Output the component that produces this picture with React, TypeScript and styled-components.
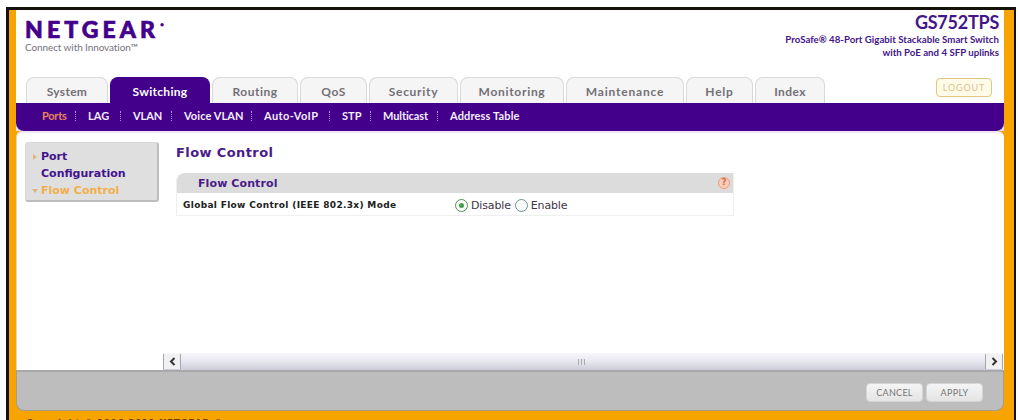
import React, { FC } from "react";
import styled, { createGlobalStyle } from "styled-components";

const GlobalStyle = createGlobalStyle`
  * {
    box-sizing: border-box;
  }

  body {
    margin: 0;
    background: #FFFFFF;
    overflow: hidden;
  }
`;

interface TextProps {
  track?: number;
}

const Frame = styled.div`
  width: 1010px;
  height: 413px;
  margin: 7px 0 0 6px;
  padding: 0 10px 0 7px;
  border: 3px solid #15120C;
  border-right-width: 2px;
  border-bottom: 0;
  background: #F7A400;
  overflow: hidden;
  font-family: Lato, "Liberation Sans", sans-serif;
`;

const Header = styled.header`
  display: flex;
  justify-content: space-between;
  height: 67px;
  padding: 0 5px 0 9px;
  background: #FFFFFF;
`;

const Brand = styled.div`
  padding-top: 9px;
`;

const Logo = styled.div`
  display: flex;
  align-items: flex-start;
  height: 22px;
  color: #43008D;
  font-weight: 900;
  font-size: 23px;
  line-height: 21px;
  letter-spacing: 4.1px;
  -webkit-text-stroke: 0.7px #43008D;
`;

const Registered = styled.span`
  margin-left: 1px;
  font-size: 7px;
  line-height: 10px;
  -webkit-text-stroke: 0;
`;

const Tagline = styled.div<TextProps>`
  color: #77737B;
  font-size: 10px;
  line-height: 13px;
  letter-spacing: ${({track}) => track || 0}px;
  white-space: nowrap;
`;

const Product = styled.div`
  padding-top: 2px;
  color: #43168A;
  text-align: right;
`;

const Model = styled.div`
  font-weight: 700;
  font-size: 18px;
  line-height: 20px;
  letter-spacing: -0.25px;
`;

const ProductInfo = styled.div`
  margin-top: 1px;
  font-weight: 700;
  font-size: 9.7px;
  line-height: 12.5px;
  white-space: nowrap;
`;

interface TabProps extends TextProps {
  isActive?: boolean;
  width: number;
}

const TabBar = styled.nav`
  display: flex;
  align-items: flex-start;
  gap: 2px;
  height: 26px;
  padding-left: 10px;
  background: #FFFFFF;
`;

const Tab = styled.div<TabProps>`
  width: ${({width}) => width}px;
  height: 26px;
  border: 1px solid ${({isActive}) => isActive ? '#43008A' : '#D9D9D9'};
  border-bottom: 0;
  border-radius: 8px 8px 0 0;
  background: ${({isActive}) => isActive ? '#43008A' : '#F5F5F5'};
  color: ${({isActive}) => isActive ? '#FFFFFF' : '#737075'};
  font-weight: 700;
  font-size: 12px;
  line-height: 27px;
  letter-spacing: ${({track}) => track || 0}px;
  text-align: center;
`;

const LogoutButton = styled.button`
  width: 56px;
  height: 19px;
  margin: 1px 12px 0 auto;
  padding: 0;
  border: 1px solid #E3C583;
  border-radius: 4px;
  background: #FFFBE9;
  color: #DFBE8A;
  font-family: Lato, sans-serif;
  font-size: 9px;
  line-height: 17px;
  letter-spacing: 0.9px;
`;

const SubNav = styled.nav`
  display: flex;
  align-items: center;
  height: 28px;
  padding: 0 0 3px 26px;
  border-radius: 0 0 8px 8px;
  background: #43008A;
`;

const SubNavRow = styled.div`
  background: linear-gradient(#43008A 50%, #E9DDF1 50%);
`;

interface SubItemProps extends TextProps {
  isActive?: boolean;
  width: number;
}

const SubItem = styled.div<SubItemProps>`
  width: ${({width}) => width}px;
  color: ${({isActive}) => isActive ? '#E8835F' : '#F4EDFA'};
  font-weight: 700;
  font-size: 11px;
  line-height: 14px;
  letter-spacing: ${({track}) => track || 0}px;
  white-space: nowrap;
`;

const Divider = styled.span`
  width: 1px;
  height: 10px;
  margin-right: 12px;
  border-left: 1px dotted #A98BCB;
`;

const Main = styled.main`
  display: flex;
  height: 239px;
  border-top: 2px solid #EEE6F4;
  border-left: 1px solid #E7D7B6;
  border-radius: 6px 6px 0 0;
  background: #FFFFFF;
  font-family: "DejaVu Sans", sans-serif;
`;

const SideMenu = styled.aside`
  width: 134px;
  height: 60px;
  margin: 9px 0 0 8px;
  padding: 5px 0 0 6px;
  border: 1px solid #DADADA;
  border-right: 2px solid #BDBDBD;
  border-bottom: 2px solid #BDBDBD;
  border-radius: 3px;
  background: #DFDFDF;
`;

interface SideItemProps {
  isActive?: boolean;
}

const SideItem = styled.div<SideItemProps>`
  display: flex;
  gap: 3px;
  color: ${({isActive}) => isActive ? '#F3AF4D' : '#43138F'};
  font-weight: 700;
  font-size: 11px;
  line-height: 17px;
`;

const Arrow = styled.svg`
  width: 6px;
  height: 6px;
  margin-top: 6px;
  fill: #DDB57C;
`;

const Content = styled.section`
  display: flex;
  flex-direction: column;
  width: 840px;
  margin-left: 4px;
`;

const Title = styled.h1`
  margin: 11px 0 0 13px;
  color: #4B1B8B;
  font-weight: 700;
  font-size: 13px;
  line-height: 17px;
  letter-spacing: 0.4px;
`;

const Panel = styled.div`
  width: 558px;
  height: 43px;
  margin: 12px 0 0 13px;
  border: 1px solid #EFEFEF;
  border-top: 0;
  border-radius: 8px 0 0 0;
`;

const PanelHeader = styled.div`
  display: flex;
  align-items: center;
  justify-content: space-between;
  height: 20px;
  padding: 0 3px 0 21px;
  border-radius: 8px 0 0 0;
  background: #DCDCDC;
  color: #4B1B8B;
  font-weight: 700;
  font-size: 11px;
  letter-spacing: 0.1px;
`;

const HelpIcon = styled.span`
  width: 12px;
  height: 12px;
  border: 1px solid #ED9A78;
  border-radius: 50%;
  background: #F9CDB8;
  color: #CF6445;
  font-size: 8px;
  line-height: 10px;
  text-align: center;
`;

const Row = styled.div`
  display: flex;
  align-items: center;
  height: 24px;
  padding-left: 6px;
`;

const Label = styled.div`
  width: 272px;
  color: #202020;
  font-weight: 700;
  font-size: 9px;
  letter-spacing: 0.33px;
  white-space: nowrap;
`;

const Option = styled.label`
  display: flex;
  align-items: center;
  gap: 3px;
  margin-right: 4px;
  color: #3F3446;
  font-size: 11px;
  letter-spacing: -0.15px;
`;

interface RadioProps {
  isChecked?: boolean;
}

const Radio = styled.span<RadioProps>`
  display: flex;
  align-items: center;
  justify-content: center;
  width: 13px;
  height: 13px;
  border: 1px solid ${({isChecked}) => isChecked ? '#4F8F5B' : '#6F9197'};
  border-radius: 50%;
  background: #FBFDFB;

  &::after {
    content: "";
    width: 5px;
    height: 5px;
    border-radius: 50%;
    background: ${({isChecked}) => isChecked ? '#43A050' : 'transparent'};
  }
`;

const ScrollBar = styled.div`
  display: flex;
  align-items: center;
  justify-content: space-between;
  height: 17px;
  margin-top: auto;
  background: linear-gradient(#F6F6FA, #E9E9F1 45%, #CCCCD8);
`;

const ScrollButton = styled.div`
  display: flex;
  align-items: center;
  justify-content: center;
  width: 18px;
  height: 15px;
  border: 1px solid #A6A6AA;
  border-width: 0 1px;
  background: #F1F1F3;

  svg {
    width: 7px;
    height: 9px;
    fill: none;
    stroke: #333333;
    stroke-width: 2;
  }
`;

const Grip = styled.span`
  width: 7px;
  height: 6px;
  margin-right: 3px;
  background: repeating-linear-gradient(90deg, #AAAAB4 0 1px, #E3E3EA 1px 3px);
`;

const Footer = styled.footer`
  display: flex;
  justify-content: flex-end;
  gap: 3px;
  height: 41px;
  padding: 11px 20px 0 0;
  border: 1px solid #A99D85;
  border-top: 2px solid #A8A8AA;
  border-radius: 0 0 8px 8px;
  background: #BDBDBD;
`;

const ActionButton = styled.button`
  width: 57px;
  height: 19px;
  padding: 0;
  border: 1px solid #D5D5D5;
  border-radius: 4px;
  background: linear-gradient(#F5F5F5, #E4E4E4);
  color: #777777;
  font-family: Lato, sans-serif;
  font-size: 9px;
  letter-spacing: 0.3px;
`;

const Copyright = styled.div`
  margin: 6px 0 0 10px;
  color: #6B3A08;
  font-weight: 700;
  font-family: "DejaVu Sans", sans-serif;
  font-size: 9px;
  line-height: 12px;
  letter-spacing: 0.5px;
  white-space: nowrap;
`;

const tabs = [
  { name: 'System', width: 82, track: 0.3 },
  { name: 'Switching', width: 100, track: 0.3, isActive: true },
  { name: 'Routing', width: 86, track: 0.5 },
  { name: 'QoS', width: 67, track: 0.5 },
  { name: 'Security', width: 89, track: 0.7 },
  { name: 'Monitoring', width: 104, track: 0.7 },
  { name: 'Maintenance', width: 118, track: 0.8 },
  { name: 'Help', width: 67, track: 0.8 },
  { name: 'Index', width: 70, track: 0.4 },
];

const subItems = [
  { name: 'Ports', width: 33, track: -0.25, isActive: true },
  { name: 'LAG', width: 32, track: 0.1 },
  { name: 'VLAN', width: 38, track: -0.1 },
  { name: 'Voice VLAN', width: 67, track: 0.1 },
  { name: 'Auto-VoIP', width: 65, track: 0.4 },
  { name: 'STP', width: 28, track: 0 },
  { name: 'Multicast', width: 54, track: -0.1 },
  { name: 'Address Table', width: 80, track: 0.15 },
];

const App: FC = () => {
  return (
    <>
      <GlobalStyle />
      <Frame>
        <Header>
          <Brand>
            <Logo>NETGEAR<Registered>•</Registered></Logo>
            <Tagline track={-0.1}>Connect with Innovation™</Tagline>
          </Brand>
          <Product>
            <Model>GS752TPS</Model>
            <ProductInfo>
              ProSafe® 48-Port Gigabit Stackable Smart Switch<br />
              with PoE and 4 SFP uplinks
            </ProductInfo>
          </Product>
        </Header>
        <TabBar>
          {tabs.map(({name, ...rest}) => <Tab key={name} {...rest}>{name}</Tab>)}
          <LogoutButton>LOGOUT</LogoutButton>
        </TabBar>
        <SubNavRow>
          <SubNav>
            {subItems.map(({name, ...rest}, index) => (
              <React.Fragment key={name}>
                {index > 0 && <Divider />}
                <SubItem {...rest}>{name}</SubItem>
              </React.Fragment>
            ))}
          </SubNav>
        </SubNavRow>
        <Main>
          <SideMenu>
            <SideItem>
              <Arrow viewBox="0 0 6 6"><path d="M1 0l4 3-4 3z" /></Arrow>
              <span>Port<br />Configuration</span>
            </SideItem>
            <SideItem isActive>
              <Arrow viewBox="0 0 6 6"><path d="M0 1h6L3 5z" /></Arrow>
              <span>Flow Control</span>
            </SideItem>
          </SideMenu>
          <Content>
            <Title>Flow Control</Title>
            <Panel>
              <PanelHeader>
                Flow Control
                <HelpIcon>?</HelpIcon>
              </PanelHeader>
              <Row>
                <Label>Global Flow Control (IEEE 802.3x) Mode</Label>
                <Option><Radio isChecked />Disable</Option>
                <Option><Radio />Enable</Option>
              </Row>
            </Panel>
            <ScrollBar>
              <ScrollButton><svg viewBox="0 0 7 9"><path d="M5.5 1L2 4.5 5.5 8" /></svg></ScrollButton>
              <Grip />
              <ScrollButton><svg viewBox="0 0 7 9"><path d="M1.5 1L5 4.5 1.5 8" /></svg></ScrollButton>
            </ScrollBar>
          </Content>
        </Main>
        <Footer>
          <ActionButton>CANCEL</ActionButton>
          <ActionButton>APPLY</ActionButton>
        </Footer>
        <Copyright>Copyright © 1996-2011 NETGEAR ®</Copyright>
      </Frame>
    </>
  );
};

export default App;
